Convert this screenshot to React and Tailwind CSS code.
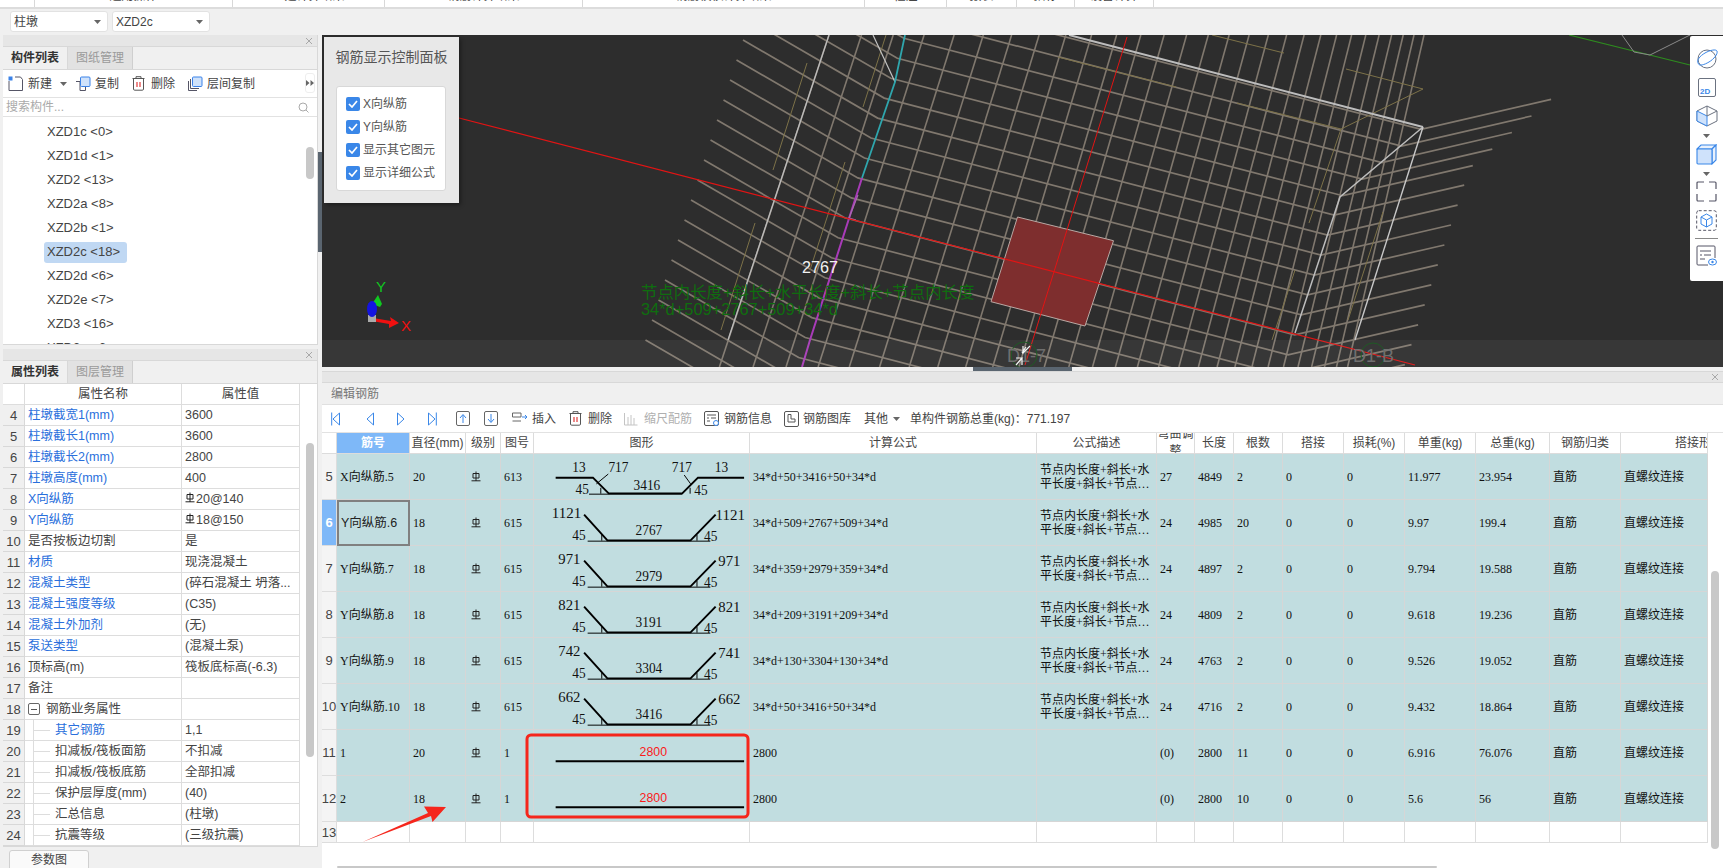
import React from "react";

const sans = "font-['Liberation_Sans','Noto_Sans_CJK_SC',sans-serif]";
const serif = "font-['Liberation_Serif','Noto_Sans_CJK_SC',serif]";

function Caret({ className = "" }) {
  return (
    <svg width="7" height="4" viewBox="0 0 7 4" className={className}>
      <path d="M0 0H7L3.5 4Z" fill="#666" />
    </svg>
  );
}

function Rebar({ className = "" }) {
  return (
    <svg width="10" height="11" viewBox="0 0 10 11" className={className}>
      <path d="M5 0.5V10M2 2.5H8V7H2ZM0.5 9.8H9.5" fill="none" stroke="#222" strokeWidth="1" />
    </svg>
  );
}

function TopBar() {
  const cells = [
    ["w-[35px]", ""],
    ["w-[198px]", "通用操作"],
    ["w-[152px]", "土建计算结果"],
    ["w-[198px]", "钢筋计算结果"],
    ["w-[282px]", "钢筋校核计算结果"],
    ["w-[82px]", "柱注"],
    ["w-[70px]", "报表"],
    ["w-[58px]", "指标"],
    ["w-[79px]", "设备计算"],
  ];
  return (
    <div className="h-[9px] bg-white border-b-2 border-[#dcdcdc] flex overflow-hidden shrink-0">
      {cells.map(([w, t], i) => (
        <div key={i} className={`${w} h-[7px] border-r border-[#d8d8d8] relative overflow-hidden text-center`}>
          <span className="block -mt-[11px] text-[12px] leading-[14px] text-[#444]">{t}</span>
        </div>
      ))}
    </div>
  );
}

function SelectBox({ label }) {
  return (
    <div className="w-[98px] h-[21px] bg-white border border-[#e2e2e2] rounded-[3px] flex items-center justify-between pl-[3px] pr-[6px] text-[12px] text-[#444]">
      <span>{label}</span>
      <Caret />
    </div>
  );
}

function PanelHeader() {
  return (
    <div className="h-[12px] bg-[#e6e6e6] border-b border-[#d8d8d8] flex items-center justify-end pr-[4px] shrink-0">
      <svg width="8" height="8" viewBox="0 0 8 8"><path d="M1 1L7 7M7 1L1 7" stroke="#a8a8a8" strokeWidth="1" /></svg>
    </div>
  );
}

function Tabs({ a, b }) {
  return (
    <div className="h-[23px] bg-[#f0f0f0] border-b border-[#d8d8d8] flex shrink-0 text-[12px]">
      <div className="w-[65px] flex items-center justify-center font-bold text-[#333] bg-[#f0f0f0] border-r border-[#d8d8d8]">{a}</div>
      <div className="w-[65px] flex items-center justify-center text-[#9a9a9a] bg-[#e2e2e2] border-r border-[#cfcfcf]">{b}</div>
    </div>
  );
}

function CopyIcon({ layered }) {
  return (
    <svg width="16" height="16" viewBox="0 0 16 16">
      {layered && <path d="M1.5 5V14.5H10" fill="none" stroke="#556" strokeWidth="1" />}
      <path d={layered ? "M3.5 3V12.5H12" : "M1 5.5H5V14.5H10.5V11"} fill="none" stroke="#556" strokeWidth="1" />
      <rect x="5.5" y="1" width="9.5" height="9.5" rx="1" fill="#cfe2fb" stroke="#3b82e8" />
    </svg>
  );
}

function TrashIcon({ color = "#e03b3b" }) {
  return (
    <svg width="13" height="15" viewBox="0 0 13 15">
      <path d="M0.5 2.5H12.5M4 2.5V0.7H9V2.5M1.5 2.5V13a1.2 1.2 0 0 0 1.2 1.2H10.3A1.2 1.2 0 0 0 11.5 13V2.5" fill="none" stroke="#555" strokeWidth="1" />
      <path d="M5 6V11M8 6V11" stroke={color} strokeWidth="1.2" />
    </svg>
  );
}

function ComponentPanel() {
  const items = ["XZD1c <0>", "XZD1d <1>", "XZD2 <13>", "XZD2a <8>", "XZD2b <1>", "XZD2c <18>", "XZD2d <6>", "XZD2e <7>", "XZD3 <16>", "XZD3a <6>"];
  return (
    <div className="h-[310px] flex flex-col border-r border-b border-[#d8d8d8] bg-white shrink-0">
      <PanelHeader />
      <Tabs a="构件列表" b="图纸管理" />
      <div className="h-[28px] border-b border-[#e2e2e2] flex items-center pl-[5px] text-[12px] text-[#444] shrink-0 relative">
        <svg width="16" height="16" viewBox="0 0 16 16">
          <path d="M1 5V14.5H14.5V3.5L12.5 1H7" fill="none" stroke="#556" strokeWidth="1" />
          <rect x="0.5" y="0.5" width="4" height="4" fill="#3b82e8" />
        </svg>
        <span className="ml-[4px]">新建</span>
        <Caret className="ml-[8px]" />
        <span className="ml-[8px] flex"><CopyIcon /></span>
        <span className="ml-[4px]">复制</span>
        <span className="ml-[13px] flex"><TrashIcon /></span>
        <span className="ml-[6px]">删除</span>
        <span className="ml-[12px] flex"><CopyIcon layered /></span>
        <span className="ml-[4px]">层间复制</span>
        <div className="absolute right-[2px] top-[3px] w-[10px] h-[20px] bg-white rounded-[3px] border border-[#eeeeee] flex items-center justify-center">
          <svg width="8" height="6" viewBox="0 0 8 6"><path d="M0 0L3.5 3L0 6ZM4.5 0L8 3L4.5 6Z" fill="#666" /></svg>
        </div>
      </div>
      <div className="h-[19px] border-b border-[#e2e2e2] flex items-center justify-between pl-[3px] pr-[8px] text-[12px] text-[#aaaaaa] shrink-0">
        <span>搜索构件...</span>
        <svg width="11" height="11" viewBox="0 0 11 11"><circle cx="5" cy="5" r="4" fill="none" stroke="#aaa" /><path d="M8 8L10.5 10.5" stroke="#aaa" /></svg>
      </div>
      <div className="flex-1 overflow-hidden relative pl-[41px] pt-[3px]">
        {items.map((t, i) => (
          <div key={t} className="h-[24px] flex items-center">
            <span className={`pl-[3px] pr-[7px] h-[21px] flex items-center rounded-[3px] text-[13px] text-[#444] ${i === 5 ? "bg-[#c0d8f3]" : ""}`}>{t}</span>
          </div>
        ))}
        <div className="absolute left-[303px] top-[30px] w-[8px] h-[32px] rounded-[4px] bg-[#c8c8c8]" />
      </div>
    </div>
  );
}

const props = [
  ["4", "柱墩截宽1(mm)", "3600", 1],
  ["5", "柱墩截长1(mm)", "3600", 1],
  ["6", "柱墩截长2(mm)", "2800", 1],
  ["7", "柱墩高度(mm)", "400", 1],
  ["8", "X向纵筋", "@20@140", 1],
  ["9", "Y向纵筋", "@18@150", 1],
  ["10", "是否按板边切割", "是", 0],
  ["11", "材质", "现浇混凝土", 1],
  ["12", "混凝土类型", "(碎石混凝土 坍落...", 1],
  ["13", "混凝土强度等级", "(C35)", 1],
  ["14", "混凝土外加剂", "(无)", 1],
  ["15", "泵送类型", "(混凝土泵)", 1],
  ["16", "顶标高(m)", "筏板底标高(-6.3)", 0],
  ["17", "备注", "", 0],
  ["18", "钢筋业务属性", "", 2],
  ["19", "其它钢筋", "1,1", 3],
  ["20", "扣减板/筏板面筋", "不扣减", 4],
  ["21", "扣减板/筏板底筋", "全部扣减", 4],
  ["22", "保护层厚度(mm)", "(40)", 4],
  ["23", "汇总信息", "(柱墩)", 4],
  ["24", "抗震等级", "(三级抗震)", 4],
];

function PropName({ name, kind }) {
  if (kind === 2) {
    return (
      <div className="flex items-center pl-[3px]">
        <span className="w-[12px] h-[12px] border border-[#666] rounded-[2px] flex items-center justify-center mr-[6px]">
          <span className="w-[6px] h-px bg-[#555]" />
        </span>
        <span className="text-[#444]">{name}</span>
      </div>
    );
  }
  if (kind >= 3) {
    return (
      <div className="flex items-center h-full">
        <div className="ml-[8px] w-[17px] h-full border-l border-[#dddddd] flex items-center shrink-0">
          <div className="w-[16px] h-px bg-[#dddddd]" />
        </div>
        <span className={`ml-[5px] ${kind === 3 ? "text-[#2a6fdc]" : "text-[#444]"}`}>{name}</span>
      </div>
    );
  }
  return <span className={`pl-[3px] ${kind === 1 ? "text-[#2a6fdc]" : "text-[#444]"}`}>{name}</span>;
}

function PropertyPanel() {
  return (
    <div className="flex-1 flex flex-col min-h-0">
      <div className="h-[498px] flex flex-col bg-white border-r border-b border-[#d8d8d8] shrink-0 relative overflow-hidden">
        <PanelHeader />
        <Tabs a="属性列表" b="图层管理" />
        <div className="grid grid-cols-[22px_157px_118px] text-[12.5px] leading-none">
          <div className="h-[21px] border-r border-b border-[#dddddd]" />
          <div className="h-[21px] border-r border-b border-[#dddddd] flex items-center justify-center text-[#444]">属性名称</div>
          <div className="h-[21px] border-r border-b border-[#dddddd] flex items-center justify-center text-[#444]">属性值</div>
          {props.map(([n, name, val, kind]) => (
            <React.Fragment key={n}>
              <div className="h-[21px] bg-[#f0f0f0] border-r border-b border-[#d8d8d8] flex items-center justify-center text-[13px] text-[#444]">{n}</div>
              <div className="h-[21px] border-r border-b border-[#dddddd] flex items-center overflow-hidden whitespace-nowrap">
                <PropName name={name} kind={kind} />
              </div>
              <div className="h-[21px] border-r border-b border-[#dddddd] flex items-center pl-[3px] text-[#444] whitespace-nowrap overflow-hidden">
                {val.startsWith("@") ? (
                  <>
                    <Rebar className="mb-[3px] mr-px" />
                    <span>{val.slice(1)}</span>
                  </>
                ) : val}
              </div>
            </React.Fragment>
          ))}
        </div>
        <div className="absolute left-[303px] top-[94px] w-[8px] h-[314px] rounded-[4px] bg-[#c8c8c8]" />
      </div>
      <div className="pl-[6px] pt-[3px]">
        <div className="w-[80px] h-[20px] bg-[#fafafa] border border-[#d0d0d0] rounded-t-[3px] flex items-center justify-center text-[12px] text-[#444]">参数图</div>
      </div>
    </div>
  );
}

function buildMesh() {
  const long = [];
  const steep = [];
  const rightX = (y) => (y < 197 ? 1340 + (197 - y) * (83 / 70) : 1340 - (y - 197) * 0.33);
  for (let i = -6; i < 16; i++) {
    const lx = 743 - 6.5 * i;
    const ly = 40 + 20 * i;
    const s = (905 - 0.33 * (ly - 35) - lx) / (1 + 0.33 * 0.58);
    const bx = lx + s;
    const by = ly + 0.58 * s;
    let rx = bx;
    let ry = by;
    for (let k = 0; k < 800; k++) {
      if (rx >= rightX(ry)) break;
      rx += 1;
      ry += 0.26;
    }
    long.push(`M${lx} ${ly}L${bx.toFixed(1)} ${by.toFixed(1)}L${rx.toFixed(1)} ${ry.toFixed(1)}L${(rx + 130).toFixed(1)} ${(ry - 30).toFixed(1)}`);
  }
  const n = 28;
  for (let j = 0; j <= n; j++) {
    const t = j / n;
    const top = 829 + 595 * (0.45 * t + 0.55 * (1 - (1 - t) * (1 - t)));
    const k = -0.33 + 0.1 * t;
    steep.push(`M${top.toFixed(1)} 35L${(top + k * 332).toFixed(1)} 367`);
  }
  return { long, steep };
}

const tan = [
  [1212, 35, 1284, 53], [1058, 57, 1176, 87], [1237, 103, 1341, 129], [1346, 69, 1423, 89], [1423, 89, 1341, 129],
  [1341, 129, 1309, 223], [1383, 212, 1348, 320], [1295, 270, 1272, 340], [807, 63, 773, 170], [755, 223, 721, 330],
  [886, 35, 863, 107], [845, 162, 810, 270],
];

function Scene() {
  const { long, steep } = buildMesh();
  return (
    <svg viewBox="322 35 1401 332" className="absolute inset-0 w-full h-full">
      <path d="M1569 35L1690 65" stroke="#2e8b1f" strokeWidth="1.2" />
      <path d="M1622 35L1634 52L1650 55L1690 35" fill="none" stroke="#8a8a8a" strokeWidth="1" />
      {steep.map((d, i) => <path key={i} d={d} stroke="#80786e" strokeWidth="1.6" fill="none" />)}
      {long.map((d, i) => <path key={i} d={d} stroke="#80786e" strokeWidth="1.7" fill="none" />)}
      {tan.map(([a, b, c, d], i) => <line key={i} x1={a} y1={b} x2={c} y2={d} stroke="#7d7249" strokeWidth="1" />)}
      <path d="M829 35L728 340" stroke="#bcbcbc" strokeWidth="1.3" />
      <path d="M873 35L895 82" stroke="#c4c4c4" strokeWidth="1.2" />
      <path d="M1069 35L1423 127" stroke="#bdbdbd" strokeWidth="2" />
      <path d="M1423 127L1340 197L1295 333" fill="none" stroke="#bdbdbd" strokeWidth="1.5" />
      <path d="M1423 127L1355 340" stroke="#c8c8c8" strokeWidth="1.4" />
      <path d="M905 35L895 82L862 178" fill="none" stroke="#2fa6ad" strokeWidth="1.8" />
      <path d="M862 178L810 340L802 367" fill="none" stroke="#a83bb8" strokeWidth="2" />
      <path d="M858 195L849 218L856 220" fill="none" stroke="#a86bb0" strokeWidth="1.2" />
      <path d="M1017.5 217L1113.5 240.7L1085 326L991 301.7Z" fill="#7e2e2e" stroke="#b9a9a4" strokeWidth="1" />
      <path d="M459 118L1415 365" stroke="#e21414" strokeWidth="1.2" />
      <path d="M1127 37L1025 365" stroke="#e21414" strokeWidth="1" />
      <text x="802" y="273" fill="#f2f2f2" textLength="36" lengthAdjust="spacingAndGlyphs" className={`${sans} text-[17px]`}>2767</text>
      <text x="641" y="298" fill="#0f6d0f" className={`${sans} text-[16.4px]`}>节点内长度+斜长+水平长度+斜长+节点内长度</text>
      <text x="641" y="315" fill="#0f6d0f" className={`${sans} text-[16.4px]`}>34*d+509+2767+509+34*d</text>
      <path d="M373 318L391 321L390 317L399 323L389 328L389 324L372 321Z" fill="#f01010" />
      <rect x="368" y="315" width="8" height="7" fill="#aaa" />
      <path d="M378 295L382 304L380 307L372 304Z" fill="#10c820" />
      <ellipse cx="372" cy="309" rx="5" ry="8" fill="#1414e0" />
      <text x="376" y="292" fill="#10c820" className={`${sans} text-[15px]`}>Y</text>
      <text x="401" y="331" fill="#f01010" className={`${sans} text-[15px]`}>X</text>
      <rect x="322" y="340" width="1401" height="27" fill="#ffffff" fillOpacity="0.05" />
      <circle cx="1024" cy="355" r="13" fill="none" stroke="#1f5a25" strokeWidth="1" />
      <circle cx="1373" cy="355" r="12" fill="none" stroke="#1f5a25" strokeWidth="1" />
      <text x="1007" y="362" fill="#6f6f6f" className={`${sans} text-[18px]`}>D1-7</text>
      <text x="1353" y="362" fill="#6f6f6f" className={`${sans} text-[18px]`}>D1-B</text>
      <path d="M1023 346L1023 353L1030 346M1026 347L1022 353M1016 365L1022 358L1016 358M1022 358V365" fill="none" stroke="#f4f4f4" strokeWidth="1.2" />
    </svg>
  );
}

function ControlPanel() {
  const opts = ["X向纵筋", "Y向纵筋", "显示其它图元", "显示详细公式"];
  return (
    <div className="absolute left-[2px] top-[2px] w-[135px] h-[166px] bg-[#e8e8e8] shadow-[2px_2px_4px_rgba(0,0,0,0.35)] px-[12px] flex flex-col">
      <div className="h-[49px] flex items-center justify-center pb-[8px] text-[14px] text-[#555] whitespace-nowrap">钢筋显示控制面板</div>
      <div className="w-[110px] h-[105px] bg-white border border-[#d8d8d8] rounded-[3px] pt-[5px] pl-[9px]">
        {opts.map((t) => (
          <div key={t} className="h-[23px] flex items-center text-[12px] text-[#555]">
            <span className="w-[14px] h-[14px] rounded-[2px] bg-[#3a87e8] flex items-center justify-center mr-[3px]">
              <svg width="10" height="8" viewBox="0 0 10 8"><path d="M1 4L4 7L9 1" fill="none" stroke="#fff" strokeWidth="1.7" /></svg>
            </span>
            {t}
          </div>
        ))}
      </div>
    </div>
  );
}

function SideToolbar() {
  const g = "#6b7280";
  const b = "#3a87e8";
  return (
    <div className="absolute right-0 top-[1px] w-[33px] h-[245px] bg-white rounded-l-[2px] flex flex-col items-center pt-[12px]">
      <svg width="22" height="21" viewBox="0 0 22 21">
        <circle cx="11" cy="11" r="9" fill="none" stroke={g} />
        <path d="M2.5 16C0 12 4 8 9 5C14 2 20 1 21 3C22 6 18 11 13 14C8 17 3.5 18 2.5 16Z" fill="none" stroke={b} />
      </svg>
      <svg width="18" height="19" viewBox="0 0 18 19" className="mt-[9px]">
        <rect x="0.5" y="0.5" width="17" height="18" rx="1.5" fill="none" stroke={g} />
        <text x="2" y="16" fill={b} className={`${sans} text-[8px] font-bold`}>2D</text>
      </svg>
      <svg width="22" height="22" viewBox="0 0 22 22" className="mt-[8px]">
        <path d="M11 1L21 6V16L11 21L1 16V6Z" fill="none" stroke={g} />
        <path d="M1 6L11 11V21L1 16Z" fill="#cfe2fb" stroke={b} />
        <path d="M11 1V11M11 11L21 6" stroke={g} />
      </svg>
      <Caret className="mt-[7px]" />
      <svg width="21" height="21" viewBox="0 0 21 21" className="mt-[6px]">
        <path d="M1 5L5 1H20L16 5Z" fill="#e8f1fd" stroke={b} strokeWidth="1.1" />
        <path d="M16 5L20 1V16L16 20Z" fill="#e8f1fd" stroke={b} strokeWidth="1.1" />
        <rect x="1" y="5" width="15" height="15" rx="1" fill="#cfe2fb" stroke={b} strokeWidth="1.1" />
      </svg>
      <Caret className="mt-[7px]" />
      <svg width="21" height="21" viewBox="0 0 21 21" className="mt-[5px]">
        <path d="M1 8V2A1 1 0 0 1 2 1H8M13 1H19A1 1 0 0 1 20 2V8M20 13V19A1 1 0 0 1 19 20H13M8 20H2A1 1 0 0 1 1 19V13" fill="none" stroke="#556" strokeWidth="1.2" />
      </svg>
      <svg width="21" height="21" viewBox="0 0 21 21" className="mt-[8px]">
        <rect x="0.7" y="0.7" width="19.6" height="19.6" rx="2" fill="none" stroke="#556" strokeDasharray="3 2" />
        <path d="M10.5 4L16 7V14L10.5 17L5 14V7Z M5 7L10.5 10L16 7M10.5 10V17" fill="none" stroke={b} />
      </svg>
      <div className="w-[23px] h-px bg-[#888888] mt-[7px]" />
      <svg width="21" height="21" viewBox="0 0 21 21" className="mt-[6px]">
        <path d="M12 20H2A1 1 0 0 1 1 19V2A1 1 0 0 1 2 1H18A1 1 0 0 1 19 2V13" fill="none" stroke="#556" />
        <path d="M4 6H15M4 10H6M8 10H15M4 14H9" stroke="#556" />
        <ellipse cx="16.5" cy="17" rx="4" ry="3" fill="none" stroke={b} />
        <circle cx="16.5" cy="17" r="1.2" fill={b} />
      </svg>
    </div>
  );
}

function Nav({ dir, bar }) {
  const left = dir === "l";
  return (
    <svg width="10" height="14" viewBox="0 0 10 14">
      <path d={left ? "M8.5 1V13L2 7Z" : "M1.5 1V13L8 7Z"} fill="none" stroke="#3a87e8" strokeWidth="1" />
      {bar && <path d={left ? "M0.7 0.5V13.5" : "M9.3 0.5V13.5"} stroke="#3a87e8" strokeWidth="1" />}
    </svg>
  );
}

function BoxArrow({ up }) {
  return (
    <svg width="14" height="15" viewBox="0 0 14 15">
      <rect x="0.5" y="0.5" width="13" height="14" rx="1.5" fill="none" stroke="#666" />
      <path d={up ? "M7 12V4M4 7L7 3.5L10 7" : "M7 3V11M4 8L7 11.5L10 8"} fill="none" stroke="#3a87e8" />
    </svg>
  );
}

function RebarToolbar() {
  return (
    <div className="h-[28px] bg-white border-b border-[#e2e2e2] flex items-center pl-[9px] text-[12px] text-[#444] whitespace-nowrap shrink-0">
      <Nav dir="l" bar />
      <span className="ml-[24px] flex"><Nav dir="l" /></span>
      <span className="ml-[21px] flex"><Nav dir="r" /></span>
      <span className="ml-[21px] flex"><Nav dir="r" bar /></span>
      <span className="ml-[19px] flex"><BoxArrow up /></span>
      <span className="ml-[14px] flex"><BoxArrow /></span>
      <svg width="16" height="13" viewBox="0 0 16 13" className="ml-[14px]">
        <path d="M0.5 1H9V5H0.5ZM0.5 9H9" fill="none" stroke="#666" />
        <path d="M10 5H15M13 3L15 5L13 7" fill="none" stroke="#3a87e8" />
      </svg>
      <span className="ml-[4px]">插入</span>
      <span className="ml-[13px] flex"><TrashIcon /></span>
      <span className="ml-[6px]">删除</span>
      <svg width="14" height="14" viewBox="0 0 14 14" className="ml-[12px]">
        <path d="M0.5 1V13H13.5M4 5V13M7 3V13M10 6V13" fill="none" stroke="#c4c4c4" />
      </svg>
      <span className="ml-[6px] text-[#b0b0b0]">缩尺配筋</span>
      <svg width="16" height="16" viewBox="0 0 16 16" className="ml-[12px]">
        <rect x="0.5" y="0.5" width="14" height="14" rx="1.5" fill="none" stroke="#555" />
        <path d="M3 4H12M3 7H5M7 7H12M3 10H6" stroke="#555" />
        <circle cx="12" cy="12" r="2.5" fill="#fff" stroke="#3a87e8" />
      </svg>
      <span className="ml-[4px]">钢筋信息</span>
      <svg width="16" height="16" viewBox="0 0 16 16" className="ml-[12px]">
        <rect x="0.5" y="0.5" width="14" height="15" rx="1.5" fill="none" stroke="#555" />
        <path d="M4 3.5H7V8H11V11H4Z" fill="none" stroke="#555" />
      </svg>
      <span className="ml-[3px]">钢筋图库</span>
      <span className="ml-[13px]">其他</span>
      <Caret className="ml-[5px]" />
      <span className="ml-[10px]">单构件钢筋总重(kg)：771.197</span>
    </div>
  );
}

const gridCols = "grid grid-cols-[15px_73px_56px_35px_33px_216px_287px_120px_38px_39px_49px_61px_61px_71px_74px_71px_87px]";
const heads = ["", "筋号", "直径(mm)", "级别", "图号", "图形", "计算公式", "公式描述", "弯曲调整", "长度", "根数", "搭接", "损耗(%)", "单重(kg)", "总重(kg)", "钢筋归类", "搭接形式"];

const rows = [
  { n: "5", name: "X向纵筋.5", d: "20", fig: "613", f: "34*d+50+3416+50+34*d", desc: 1, bend: "27", len: "4849", c: "2", a: "11.977", t: "23.954", shape: "x", s: ["3416"] },
  { n: "6", name: "Y向纵筋.6", d: "18", fig: "615", f: "34*d+509+2767+509+34*d", desc: 1, bend: "24", len: "4985", c: "20", a: "9.97", t: "199.4", shape: "y", s: ["1121", "1121", "2767"], sel: true },
  { n: "7", name: "Y向纵筋.7", d: "18", fig: "615", f: "34*d+359+2979+359+34*d", desc: 1, bend: "24", len: "4897", c: "2", a: "9.794", t: "19.588", shape: "y", s: ["971", "971", "2979"] },
  { n: "8", name: "Y向纵筋.8", d: "18", fig: "615", f: "34*d+209+3191+209+34*d", desc: 1, bend: "24", len: "4809", c: "2", a: "9.618", t: "19.236", shape: "y", s: ["821", "821", "3191"] },
  { n: "9", name: "Y向纵筋.9", d: "18", fig: "615", f: "34*d+130+3304+130+34*d", desc: 1, bend: "24", len: "4763", c: "2", a: "9.526", t: "19.052", shape: "y", s: ["742", "741", "3304"] },
  { n: "10", name: "Y向纵筋.10", d: "18", fig: "615", f: "34*d+50+3416+50+34*d", desc: 1, bend: "24", len: "4716", c: "2", a: "9.432", t: "18.864", shape: "y", s: ["662", "662", "3416"] },
  { n: "11", name: "1", d: "20", fig: "1", f: "2800", desc: 0, bend: "(0)", len: "2800", c: "11", a: "6.916", t: "76.076", shape: "l" },
  { n: "12", name: "2", d: "18", fig: "1", f: "2800", desc: 0, bend: "(0)", len: "2800", c: "10", a: "5.6", t: "56", shape: "l" },
];

function Label({ x, y, children, per = 6.8 }) {
  return (
    <text x={x} y={y} textAnchor="middle" fill="#111" textLength={String(children).length * per} lengthAdjust="spacingAndGlyphs" className={`${serif} text-[15px]`}>
      {children}
    </text>
  );
}

function Shape({ kind, s }) {
  if (kind === "l") {
    return (
      <svg width="216" height="45" viewBox="0 0 216 45" className="block">
        <text x="118.5" y="26" textAnchor="middle" fill="#fa1a1a" textLength="28" lengthAdjust="spacingAndGlyphs" className={`${sans} text-[12.5px]`}>2800</text>
        <path d="M19 31.5H211" stroke="#000" strokeWidth="2" />
      </svg>
    );
  }
  if (kind === "x") {
    return (
      <svg width="216" height="45" viewBox="0 0 216 45" className="block">
        <Label x="42.7" y="18">13</Label>
        <Label x="83" y="18">717</Label>
        <Label x="147.6" y="18">717</Label>
        <Label x="188" y="18">13</Label>
        <Label x="46" y="40">45</Label>
        <Label x="112" y="36">3416</Label>
        <Label x="167" y="41">45</Label>
        <path d="M19 23.7H57L73 39.7H148L164 23.7H211" fill="none" stroke="#000" strokeWidth="2" />
        <path d="M53 40.5H148" stroke="#000" strokeWidth="1" />
        <path d="M72.6 20L60.5 30M150 21L156.5 30M65 34V40M156 34V40" fill="none" stroke="#000" strokeWidth="1" />
      </svg>
    );
  }
  return (
    <svg width="216" height="45" viewBox="0 0 216 45" className="block">
      <Label x={s[0].length > 3 ? 30 : 33} y="18" per={7.5}>{s[0]}</Label>
      <Label x={s[1].length > 3 ? 197 : 196} y="20" per={7.5}>{s[1]}</Label>
      <Label x="42.7" y="40">45</Label>
      <Label x="177" y="41">45</Label>
      <Label x="114" y="35">{s[2]}</Label>
      <path d="M48 14.5L71.7 40.7H156.5L182 14.5" fill="none" stroke="#000" strokeWidth="2" />
      <path d="M51.6 41.5H176.6" stroke="#000" strokeWidth="1" />
      <path d="M66 35V41M163 35V41" stroke="#000" strokeWidth="1" />
    </svg>
  );
}

function Cell({ children, className = "" }) {
  return <div className={`h-[46px] border-r border-b border-[#d6d6d6] bg-[#c1dde0] flex items-center pl-[3px] overflow-hidden whitespace-nowrap ${serif} text-[12px] text-[#111] ${className}`}>{children}</div>;
}

function RebarTable() {
  return (
    <div className="relative flex-1 min-h-0">
      <div className={gridCols}>
        {heads.map((h, i) => (
          <div key={i} className={`h-[21px] border-r border-b border-[#dcdcdc] flex items-center text-center text-[12px] leading-[17px] overflow-hidden ${i === 1 ? "bg-[#7eb8f8] text-white font-bold" : "bg-white text-[#444]"} ${i === 16 ? "justify-start pl-[54px] whitespace-nowrap" : "justify-center"}`}>{h}</div>
        ))}
        {rows.map((r) => (
          <React.Fragment key={r.n}>
            <div className={`h-[46px] border-r border-b border-[#dddddd] flex items-center justify-center text-[13px] leading-none ${r.sel ? "bg-[#7eb8f8] text-white font-bold" : "bg-[#f4f4f4] text-[#444]"}`}>{r.n}</div>
            {r.sel ? (
              <div className="h-[46px] border-2 border-[#808080] bg-[#c1dde0] flex items-center pl-[2px] text-[12.5px] text-[#222] whitespace-nowrap">{r.name}</div>
            ) : (
              <Cell>{r.name}</Cell>
            )}
            <Cell>{r.d}</Cell>
            <Cell className="pl-[5px]"><Rebar /></Cell>
            <Cell>{r.fig}</Cell>
            <Cell className="pl-0"><Shape kind={r.shape} s={r.s} /></Cell>
            <Cell>{r.f}</Cell>
            <Cell>
              {r.desc ? <span className="leading-[14px]">节点内长度+斜长+水<br />平长度+斜长+节点…</span> : null}
            </Cell>
            <Cell>{r.bend}</Cell>
            <Cell>{r.len}</Cell>
            <Cell>{r.c}</Cell>
            <Cell>0</Cell>
            <Cell>0</Cell>
            <Cell>{r.a}</Cell>
            <Cell>{r.t}</Cell>
            <Cell>直筋</Cell>
            <Cell>直螺纹连接</Cell>
          </React.Fragment>
        ))}
        {heads.map((_, i) => (
          <div key={i} className={`h-[21px] border-b border-[#dddddd] ${i === 0 ? "bg-[#f4f4f4] border-r flex items-center justify-center text-[13px] text-[#444] leading-none" : "bg-white border-r"}`}>{i === 0 ? "13" : ""}</div>
        ))}
      </div>
      <div className="absolute right-[4px] top-[138px] w-[8px] h-[278px] rounded-[4px] bg-[#c8c8c8]" />
      <div className="absolute left-[15px] bottom-0 w-[1100px] h-[2px] rounded-[2px] bg-[#c8c8c8]" />
    </div>
  );
}

export default function App() {
  return (
    <div className={`w-[1723px] h-[868px] overflow-hidden flex flex-col bg-[#f0f0f0] ${sans}`}>
      <TopBar />
      <div className="h-[26px] flex items-start pt-[2px] pl-[10px] gap-[4px] shrink-0">
        <SelectBox label="柱墩" />
        <SelectBox label="XZD2c" />
      </div>
      <div className="flex-1 flex min-h-0">
        <div className="w-[318px] pl-[3px] flex flex-col gap-[4px] shrink-0">
          <ComponentPanel />
          <PropertyPanel />
        </div>
        <div className="w-[4px] flex flex-col shrink-0 pt-[117px]">
          <div className="h-[100px] bg-[#5a6570]" />
        </div>
        <div className="flex-1 flex flex-col min-w-0">
          <div className="h-[332px] relative overflow-hidden bg-[#2d2d2d] shrink-0">
            <Scene />
            <ControlPanel />
            <SideToolbar />
          </div>
          <div className="h-[4px] flex justify-start pl-[651px] shrink-0">
            <div className="w-[99px] h-[4px] bg-[#5a6570]" />
          </div>
          <div className="flex-1 flex flex-col relative min-h-0 bg-white">
            <div className="h-[12px] bg-[#e6e6e6] border-y border-[#d8d8d8] flex items-center justify-end pr-[4px] shrink-0">
              <svg width="8" height="8" viewBox="0 0 8 8"><path d="M1 1L7 7M7 1L1 7" stroke="#a8a8a8" strokeWidth="1" /></svg>
            </div>
            <div className="h-[22px] bg-[#f0f0f0] border-b border-[#e0e0e0] flex items-center pl-[9px] text-[12px] text-[#777777] shrink-0">编辑钢筋</div>
            <RebarToolbar />
            <RebarTable />
            <svg viewBox="322 371 1401 497" className="absolute inset-0 w-full h-full pointer-events-none">
              <rect x="527" y="735" width="221" height="82" rx="4" fill="none" stroke="#f5261c" strokeWidth="3" />
              <path d="M362.5 842L428 813L424 806.5L446 807L432.5 822L431 816Z" fill="#f5261c" />
            </svg>
          </div>
        </div>
      </div>
    </div>
  );
}
